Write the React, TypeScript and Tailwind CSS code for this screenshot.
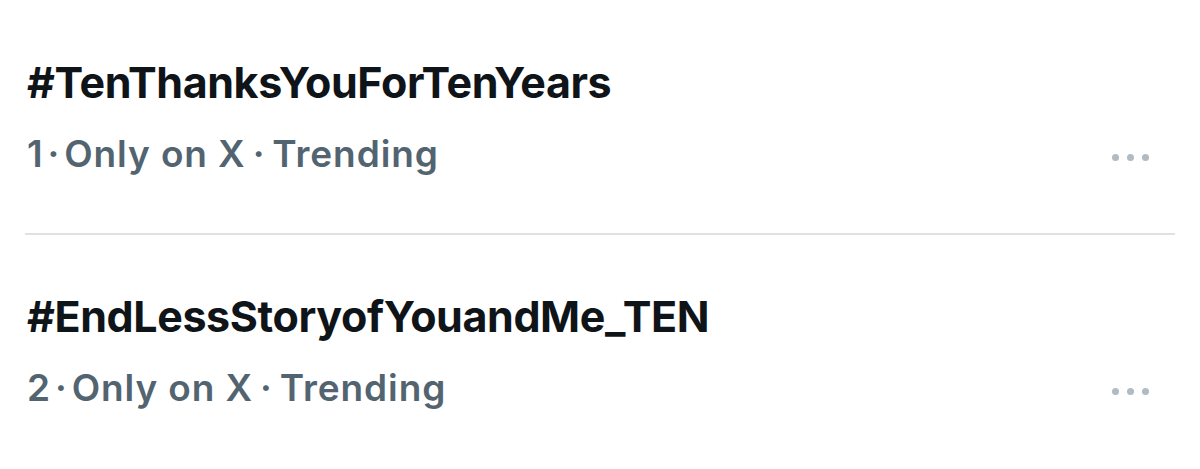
const trends = [
  { rank: 1, tag: "#TenThanksYouForTenYears" },
  { rank: 2, tag: "#EndLessStoryofYouandMe_TEN" },
];

function MoreDots() {
  return (
    <div className="flex items-center gap-[8px] pr-[51px]">
      <span className="block w-[7px] h-[7px] rounded-full bg-[#b0bbc4]"></span>
      <span className="block w-[7px] h-[7px] rounded-full bg-[#b0bbc4]"></span>
      <span className="block w-[7px] h-[7px] rounded-full bg-[#b0bbc4]"></span>
    </div>
  );
}

function TrendRow({ rank, tag }: { rank: number; tag: string }) {
  return (
    <div className="flex items-end justify-between pl-[27px]">
      <div className="flex flex-col">
        <div className="text-[43px] leading-[52px] font-bold text-[#0f1419] tracking-[-0.4px]">
          {tag}
        </div>
        <div className="mt-[24px] text-[37px] leading-[44px] font-semibold text-[#536471] tracking-[0.9px]">
          {rank}
          <span className="mx-[4px]">·</span>Only on X
          <span className="mx-[7px]">·</span>Trending
        </div>
      </div>
      <div className="pb-[15px]">
        <MoreDots />
      </div>
    </div>
  );
}

export default function App() {
  return (
    <div
      className="w-[1200px] h-[469px] bg-white overflow-hidden pt-[56px]"
      style={{ fontFamily: "Inter, 'Noto Sans', sans-serif" }}
    >
      <TrendRow rank={trends[0].rank} tag={trends[0].tag} />
      <div className="ml-[25px] mr-[25px] mt-[57px] mb-[55px] h-[2px] bg-[#dfe1e3]"></div>
      <TrendRow rank={trends[1].rank} tag={trends[1].tag} />
    </div>
  );
}
